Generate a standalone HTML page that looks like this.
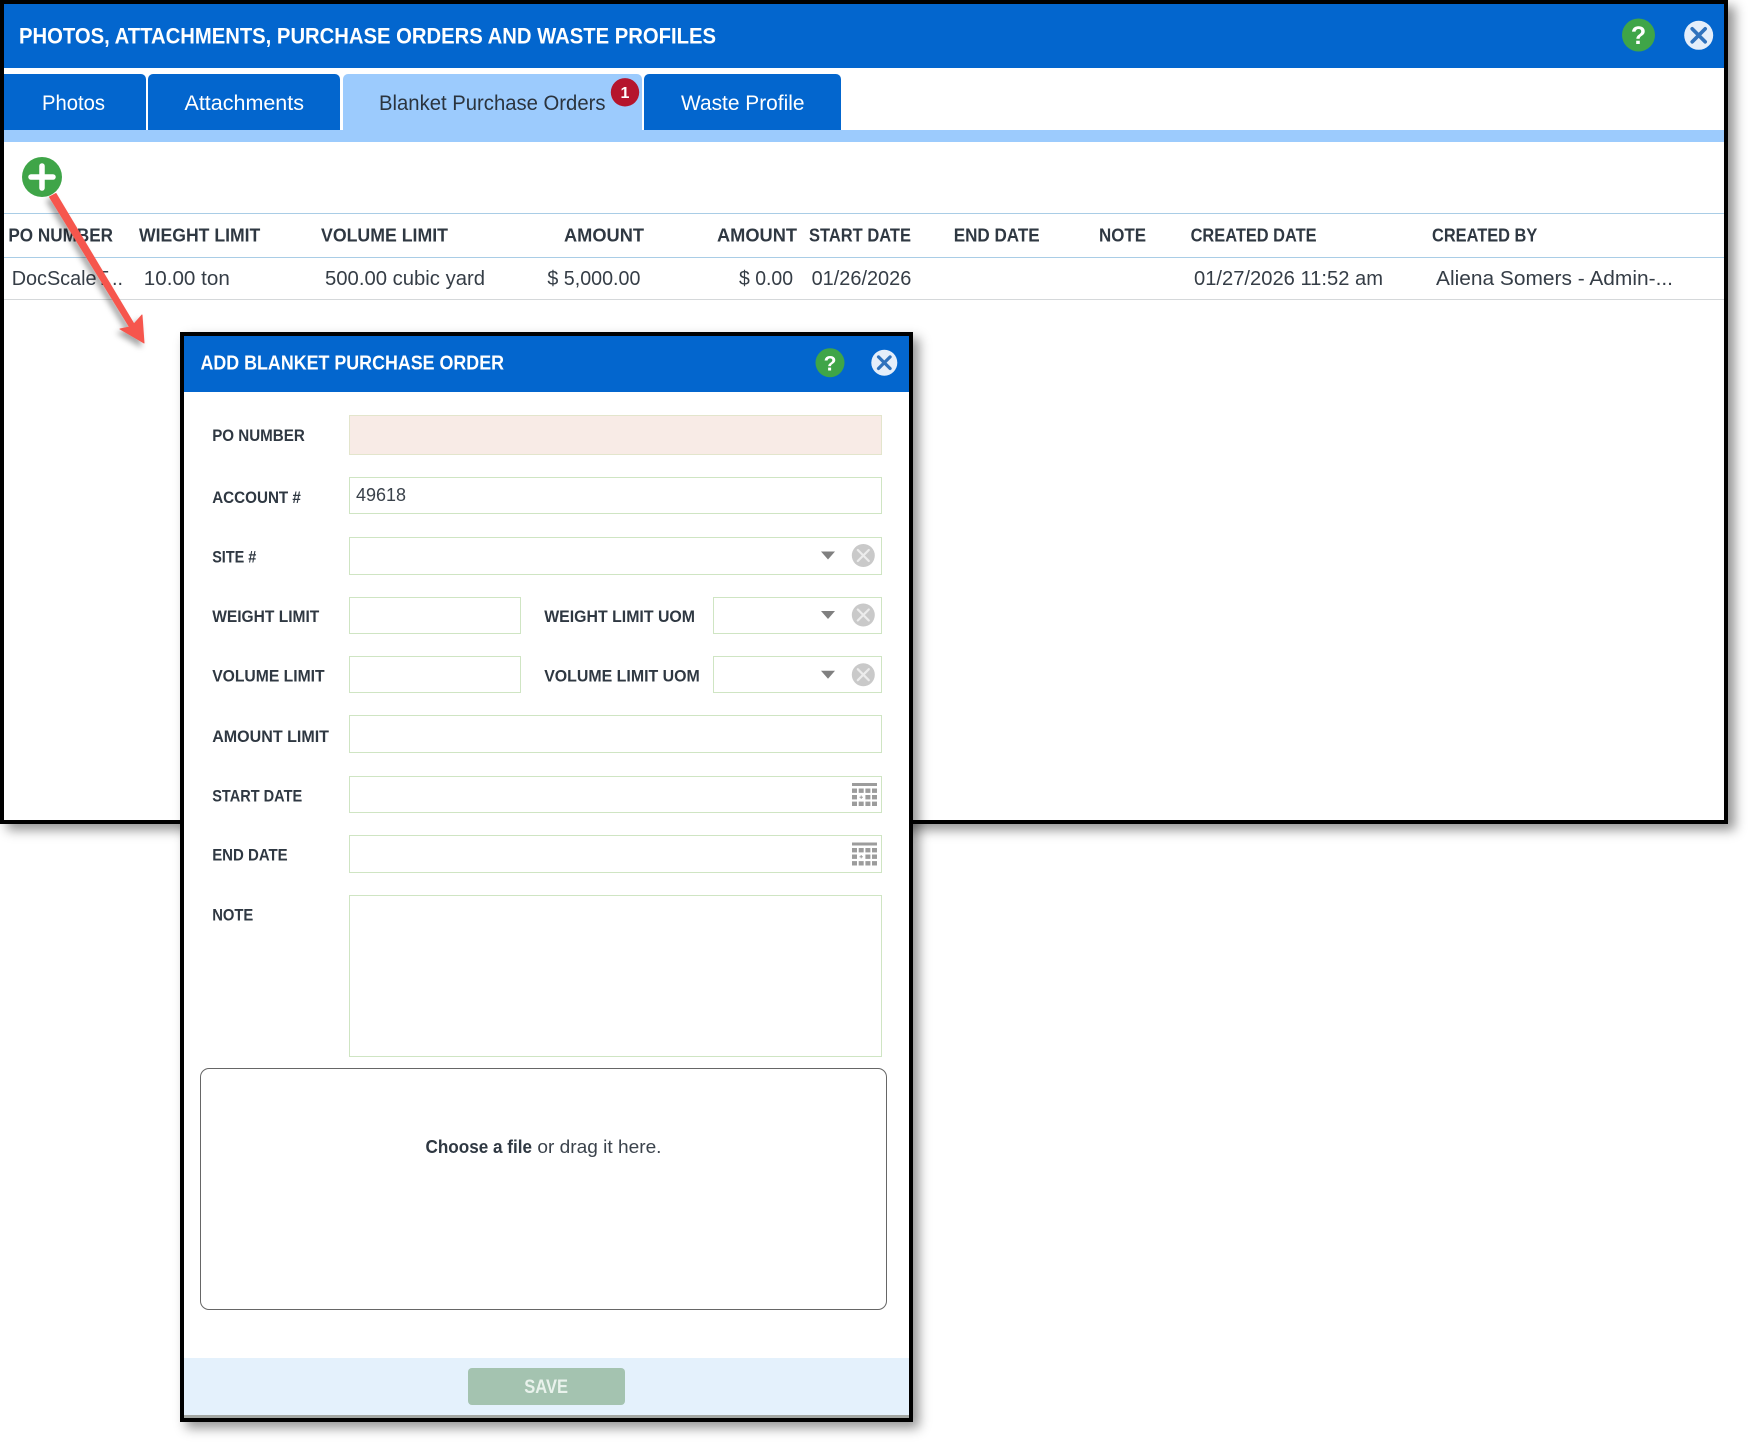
<!DOCTYPE html>
<html lang="en"><head><meta charset="utf-8"><title>Add Blanket Purchase Order</title>
<style>
html,body{margin:0;padding:0;background:#fff;width:1748px;height:1444px;overflow:hidden}
body{font-family:"Liberation Sans",sans-serif}
#w{position:absolute;left:0;top:0;width:1748px;height:1444px;overflow:hidden;background:#fff;filter:blur(.35px)}
.a{position:absolute;box-sizing:border-box}
.inp{position:absolute;box-sizing:border-box;border:1.5px solid #cfe5c3;background:#fff}
.tab{position:absolute;top:74px;height:56px;background:#0366ce;border-radius:5px 5px 0 0}
.r{position:absolute;left:4px;width:1720px;height:1px}
svg{position:absolute;left:0;top:0}
text{font-family:"Liberation Sans",sans-serif}
.h{font-weight:700;font-size:18px;fill:#2f3842}
.c{font-size:20.5px;fill:#353d46}
.l{font-weight:700;font-size:17px;fill:#2f3842}
.t{font-size:21px;fill:#fff}
</style></head><body><div id="w">
<div class="a" style="left:0;top:0;width:1728px;height:824px;background:#fff;border:4px solid #000;box-shadow:7px 6px 11px rgba(0,0,0,.42)"></div>
<div class="a" style="left:4px;top:4px;width:1720px;height:64px;background:#0366ce"></div>
<div class="tab" style="left:4px;width:142px;border-top-left-radius:0"></div>
<div class="tab" style="left:148px;width:192px"></div>
<div class="tab" style="left:343px;width:299px;background:#9ccbfd"></div>
<div class="tab" style="left:644px;width:197px"></div>
<div class="a" style="left:4px;top:130px;width:1720px;height:12px;background:#9ccbfd"></div>
<div class="r" style="top:213px;background:#a9cde6"></div>
<div class="r" style="top:257px;background:#a9cde6"></div>
<div class="r" style="top:299px;background:#d5d8da"></div>

<div class="a" style="left:180px;top:332px;width:733px;height:1090px;background:#fff;border:4px solid #000;box-shadow:6px 6px 11px rgba(0,0,0,.42)"></div>
<div class="a" style="left:184px;top:336px;width:725px;height:56px;background:#0366ce"></div>
<div class="a" style="left:184px;top:1358px;width:725px;height:57px;background:#e4f1fc"></div>
<div class="a" style="left:184px;top:1415px;width:725px;height:3px;background:#a3a7a3"></div>
<div class="a" style="left:468px;top:1368px;width:157px;height:37px;background:#a4c3b0;border-radius:4px"></div>

<div class="inp" style="left:349px;top:415px;width:533px;height:40px;background:#f8ebe6;border-color:#e3e5cc"></div>
<div class="inp" style="left:349px;top:477px;width:533px;height:37px"></div>
<div class="inp" style="left:349px;top:537px;width:533px;height:38px"></div>
<div class="inp" style="left:349px;top:597px;width:172px;height:37px"></div>
<div class="inp" style="left:713px;top:597px;width:169px;height:37px"></div>
<div class="inp" style="left:349px;top:656px;width:172px;height:37px"></div>
<div class="inp" style="left:713px;top:656px;width:169px;height:37px"></div>
<div class="inp" style="left:349px;top:715px;width:533px;height:38px"></div>
<div class="inp" style="left:349px;top:776px;width:533px;height:37px"></div>
<div class="inp" style="left:349px;top:835px;width:533px;height:38px"></div>
<div class="inp" style="left:349px;top:895px;width:533px;height:162px"></div>
<div class="a" style="left:200px;top:1068px;width:687px;height:242px;border:1.3px solid #666;border-radius:9px;background:#fff"></div>

<svg width="1748" height="1444" viewBox="0 0 1748 1444" xmlns="http://www.w3.org/2000/svg">
<defs>
<filter id="sh" x="-30%" y="-30%" width="170%" height="170%"><feDropShadow dx="-3" dy="4" stdDeviation="3" flood-color="#000" flood-opacity=".35"/></filter>
<g id="clr"><circle r="11.5" fill="#c9c9c9"/><path d="M-5.5 -5.5L5.5 5.5M5.5 -5.5L-5.5 5.5" stroke="#ececec" stroke-width="2.2" stroke-linecap="round"/></g>
<path id="tri" d="M-7 -4H7L0 4Z" fill="#808080"/>
<g id="cal" fill="#9c9c9c">
<rect x="0" y="0" width="25" height="3"/>
<rect x="0" y="5.5" width="5" height="4.4"/><rect x="6.7" y="5.5" width="5" height="4.4"/><rect x="13.4" y="5.5" width="5" height="4.4"/><rect x="20" y="5.5" width="5" height="4.4"/>
<rect x="0" y="12" width="5" height="4.4"/><rect x="13.4" y="12" width="5" height="4.4"/><rect x="20" y="12" width="5" height="4.4"/><path d="M7.5 14.2h3.4M9.2 12.5v3.4" stroke="#9c9c9c" stroke-width="1"/>
<rect x="0" y="18.6" width="5" height="4.4"/><rect x="6.7" y="18.6" width="5" height="4.4"/><rect x="13.4" y="18.6" width="5" height="4.4"/><rect x="20" y="18.6" width="5" height="4.4"/>
</g>
</defs>

<text x="19" y="43.5" font-size="22" font-weight="700" fill="#fff" textLength="697" lengthAdjust="spacingAndGlyphs">PHOTOS, ATTACHMENTS, PURCHASE ORDERS AND WASTE PROFILES</text>

<circle cx="1638.5" cy="35" r="16.5" fill="#3fa548"/>
<text x="1638.5" y="44" font-size="25" font-weight="700" fill="#fff" text-anchor="middle">?</text>
<circle cx="1698.7" cy="35.3" r="14.5" fill="#e4eefa"/>
<path d="M1692.2 28.8L1705.2 41.8M1705.2 28.8L1692.2 41.8" stroke="#2f72bd" stroke-width="3.6" stroke-linecap="round"/>

<text class="t" x="42" y="110" textLength="63" lengthAdjust="spacingAndGlyphs">Photos</text>
<text class="t" x="184.5" y="110" textLength="119.5" lengthAdjust="spacingAndGlyphs">Attachments</text>
<text class="t" x="379" y="110" textLength="226.5" lengthAdjust="spacingAndGlyphs" style="fill:#2b343e">Blanket Purchase Orders</text>
<text class="t" x="681" y="110" textLength="123.5" lengthAdjust="spacingAndGlyphs">Waste Profile</text>
<circle cx="625" cy="92.3" r="14.2" fill="#b5152d"/>
<text x="625" y="98" font-size="16" font-weight="700" fill="#fff" text-anchor="middle">1</text>

<circle cx="42" cy="177" r="20" fill="#3fa548"/>
<path d="M42 166V188M31 177H53" stroke="#fff" stroke-width="5.5" stroke-linecap="round"/>

<text class="h" x="8.4" y="241.5" textLength="104.6" lengthAdjust="spacingAndGlyphs">PO NUMBER</text>
<text class="h" x="139" y="241.5" textLength="121.3" lengthAdjust="spacingAndGlyphs">WIEGHT LIMIT</text>
<text class="h" x="321" y="241.5" textLength="127" lengthAdjust="spacingAndGlyphs">VOLUME LIMIT</text>
<text class="h" x="564" y="241.5" textLength="80" lengthAdjust="spacingAndGlyphs">AMOUNT</text>
<text class="h" x="717" y="241.5" textLength="80" lengthAdjust="spacingAndGlyphs">AMOUNT</text>
<text class="h" x="809" y="241.5" textLength="102" lengthAdjust="spacingAndGlyphs">START DATE</text>
<text class="h" x="953.7" y="241.5" textLength="86" lengthAdjust="spacingAndGlyphs">END DATE</text>
<text class="h" x="1099" y="241.5" textLength="47" lengthAdjust="spacingAndGlyphs">NOTE</text>
<text class="h" x="1190.6" y="241.5" textLength="126" lengthAdjust="spacingAndGlyphs">CREATED DATE</text>
<text class="h" x="1432" y="241.5" textLength="105.3" lengthAdjust="spacingAndGlyphs">CREATED BY</text>

<text class="c" x="11.7" y="285" textLength="111.3" lengthAdjust="spacingAndGlyphs">DocScaleT...</text>
<text class="c" x="143.8" y="285" textLength="86" lengthAdjust="spacingAndGlyphs">10.00 ton</text>
<text class="c" x="325" y="285" textLength="160" lengthAdjust="spacingAndGlyphs">500.00 cubic yard</text>
<text class="c" x="547.4" y="285" textLength="93" lengthAdjust="spacingAndGlyphs">$ 5,000.00</text>
<text class="c" x="739" y="285" textLength="54" lengthAdjust="spacingAndGlyphs">$ 0.00</text>
<text class="c" x="811.6" y="285" textLength="99.7" lengthAdjust="spacingAndGlyphs">01/26/2026</text>
<text class="c" x="1194" y="285" textLength="189" lengthAdjust="spacingAndGlyphs">01/27/2026 11:52 am</text>
<text class="c" x="1436" y="285" textLength="237" lengthAdjust="spacingAndGlyphs">Aliena Somers - Admin-...</text>

<text x="200.5" y="369.5" font-size="20" font-weight="700" fill="#fff" textLength="303.5" lengthAdjust="spacingAndGlyphs">ADD BLANKET PURCHASE ORDER</text>
<circle cx="830" cy="362.7" r="14.5" fill="#3fa548"/>
<text x="830" y="370.5" font-size="21" font-weight="700" fill="#fff" text-anchor="middle">?</text>
<circle cx="884.3" cy="362.7" r="13" fill="#e4eefa"/>
<path d="M878.5 356.9L890.1 368.5M890.1 356.9L878.5 368.5" stroke="#2f72bd" stroke-width="3.2" stroke-linecap="round"/>

<text class="l" x="212.2" y="441" textLength="92.6" lengthAdjust="spacingAndGlyphs">PO NUMBER</text>
<text class="l" x="212.2" y="503" textLength="88.7" lengthAdjust="spacingAndGlyphs">ACCOUNT #</text>
<text class="l" x="212.2" y="562.6" textLength="44.1" lengthAdjust="spacingAndGlyphs">SITE #</text>
<text class="l" x="212.2" y="622" textLength="107.1" lengthAdjust="spacingAndGlyphs">WEIGHT LIMIT</text>
<text class="l" x="544.2" y="622" textLength="150.8" lengthAdjust="spacingAndGlyphs">WEIGHT LIMIT UOM</text>
<text class="l" x="212.2" y="681.6" textLength="112.4" lengthAdjust="spacingAndGlyphs">VOLUME LIMIT</text>
<text class="l" x="544.2" y="681.6" textLength="155.6" lengthAdjust="spacingAndGlyphs">VOLUME LIMIT UOM</text>
<text class="l" x="212.2" y="742" textLength="116.8" lengthAdjust="spacingAndGlyphs">AMOUNT LIMIT</text>
<text class="l" x="212.2" y="801.3" textLength="90" lengthAdjust="spacingAndGlyphs">START DATE</text>
<text class="l" x="212.2" y="860.6" textLength="75.5" lengthAdjust="spacingAndGlyphs">END DATE</text>
<text class="l" x="212.2" y="920.3" textLength="41.1" lengthAdjust="spacingAndGlyphs">NOTE</text>

<text x="356" y="501" font-size="18.5" fill="#3a424b" textLength="50" lengthAdjust="spacingAndGlyphs">49618</text>

<use href="#tri" x="828" y="555.5"/><use href="#clr" x="863.3" y="555.5"/>
<use href="#tri" x="828" y="615"/><use href="#clr" x="863.3" y="615"/>
<use href="#tri" x="828" y="674.7"/><use href="#clr" x="863.3" y="674.7"/>
<use href="#cal" x="852" y="783"/>
<use href="#cal" x="852" y="842.5"/>

<text x="425.5" y="1153" font-size="18.5" font-weight="700" fill="#2f3842" textLength="106.5" lengthAdjust="spacingAndGlyphs">Choose a file</text>
<text x="537.4" y="1153" font-size="18.5" fill="#3a424b" textLength="124.1" lengthAdjust="spacingAndGlyphs">or drag it here.</text>

<text x="524.3" y="1393" font-size="19" font-weight="700" fill="#e9f2ec" textLength="43.7" lengthAdjust="spacingAndGlyphs">SAVE</text>

<path d="M49.5 197L56 193.5L134 324L142 315L144 343L120 329L129.5 327Z" fill="#f6574e" stroke="#f6574e" stroke-width="1" stroke-linejoin="round" filter="url(#sh)"/>
</svg>
</div></body></html>
